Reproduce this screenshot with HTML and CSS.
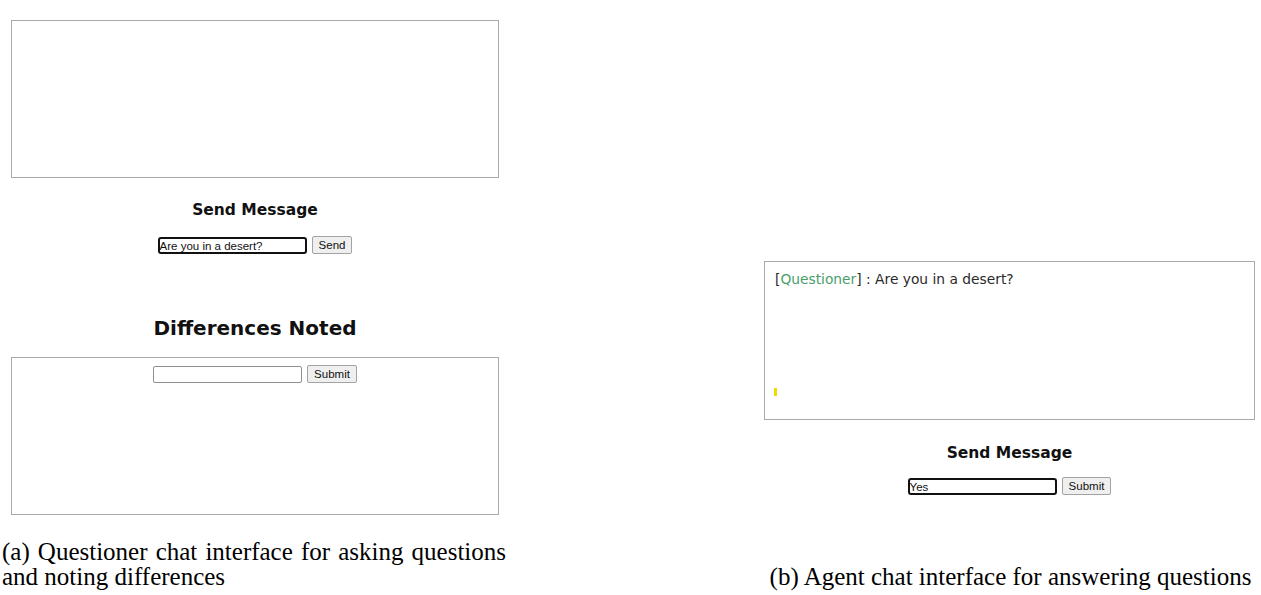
FILE: index.html
```html
<!DOCTYPE html>
<html lang="en">
<head>
    <meta charset="UTF-8">
    <title>Chat interfaces</title>
    <link rel="stylesheet" href="styles.css">
</head>
<body>

<div class="figure">

    <!-- questioner side -->
    <div class="subfig subfig-a">
        <div class="panel">
            <div class="box log"></div>

            <h3>Send Message</h3>
            <div class="row">
                <input type="text" class="focused" value="Are you in a desert?">
                <button>Send</button>
            </div>

            <h2>Differences Noted</h2>
            <div class="box notes">
                <div class="row">
                    <input type="text">
                    <button>Submit</button>
                </div>
            </div>
        </div>
        <p class="caption caption-justify">(a) Questioner chat interface for asking questions and noting differences</p>
    </div>

    <!-- agent side -->
    <div class="subfig subfig-b">
        <div class="panel">
            <div class="box log">
                <div class="msg">[<span class="who">Questioner</span>] : Are you in a desert?</div>
                <div class="typing"></div>
            </div>

            <h3>Send Message</h3>
            <div class="row">
                <input type="text" class="focused" value="Yes">
                <button>Submit</button>
            </div>
        </div>
        <p class="caption caption-center">(b) Agent chat interface for answering questions</p>
    </div>

</div>

</body>
</html>
```

FILE: styles.css
```css
body {
    margin: 0;
    font-family: "DejaVu Sans", Verdana, sans-serif;
    background: #fff;
    color: #111;
}
.figure {
    display: flex;
    gap: 250px;
    height: 595px;
    box-sizing: border-box;
    padding-bottom: 6px;
}
.subfig {
    display: flex;
    flex-direction: column;
}
.subfig-a {
    width: 510px;
    padding-top: 20px;
    box-sizing: border-box;
}
.subfig-b {
    width: 501px;
    justify-content: flex-end;
}
.panel {
    width: 488px;
    margin-left: 11px;
    text-align: center;
}
.subfig-b .panel {
    width: 491px;
    margin-left: 4px;
}
.box {
    height: 158px;
    box-sizing: border-box;
    border: 1px solid #aaa;
}
.subfig-b .box {
    height: 159px;
}
h3 {
    font-size: 15.5px;
    margin: 23px 0 17px;
}
.subfig-b h3 {
    margin: 24px 0 15px;
}
h2 {
    font-size: 20px;
    margin: 62px 0 17px;
}
.row {
    display: flex;
    justify-content: center;
    align-items: flex-end;
    gap: 5px;
    height: 18px;
}
input {
    width: 149px;
    height: 17px;
    box-sizing: border-box;
    padding: 0 2px;
    border: 1px solid #8f8f8f;
    border-radius: 2px;
    font: 11.5px "Liberation Sans", Arial, sans-serif;
    color: #111;
}
input.focused {
    border: 2px solid #111;
    border-radius: 3px;
    padding: 0;
    outline: none;
}
button {
    height: 18px;
    box-sizing: border-box;
    padding: 0 6px;
    background: #efefef;
    border: 1px solid #a3a3a3;
    border-radius: 2px;
    font: 11.5px "Liberation Sans", Arial, sans-serif;
    color: #111;
}
.notes {
    padding-top: 7px;
}
.log {
    display: flex;
    flex-direction: column;
    padding: 9px 10px 7px;
    text-align: left;
}
.msg {
    font-size: 13.8px;
    line-height: 16px;
    color: #2a2a2a;
}
.who {
    color: #4a9e6b;
}
.typing {
    width: 3px;
    height: 8px;
    margin: auto 0 16px -1px;
    background: #f5d800;
}
.caption {
    margin: auto 0 0;
    font: 25px/25px "Liberation Serif", "Times New Roman", serif;
    color: #000;
}
.caption-justify {
    padding: 0 4px 0 2px;
    text-align: justify;
}
.caption-center {
    margin-top: 69px;
    text-align: center;
}
```
